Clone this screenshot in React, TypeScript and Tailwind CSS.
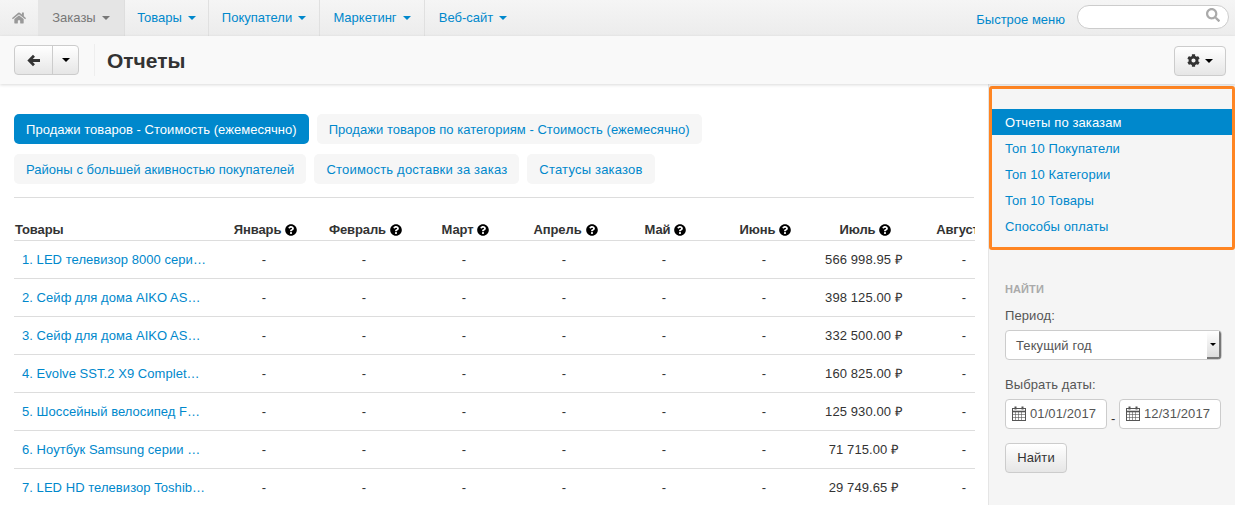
// Страница «Отчеты»: верхнее меню, панель заголовка, таблица и боковая панель
import { FaCog, FaHome, FaQuestionCircle, FaSearch } from 'react-icons/fa'

const navItems = ['Товары', 'Покупатели', 'Маркетинг', 'Веб-сайт']
const months = ['Январь', 'Февраль', 'Март', 'Апрель', 'Май', 'Июнь', 'Июль', 'Август']

const rows = [
  ['1. LED телевизор 8000 серии Samsung', '566 998.95 ₽'],
  ['2. Сейф для дома AIKO ASM-30', '398 125.00 ₽'],
  ['3. Сейф для дома AIKO ASM-20', '332 500.00 ₽'],
  ['4. Evolve SST.2 X9 Complete Set', '160 825.00 ₽'],
  ['5. Шоссейный велосипед Focus Izalco', '125 930.00 ₽'],
  ['6. Ноутбук Samsung серии 7 Chronos', '71 715.00 ₽'],
  ['7. LED HD телевизор Toshiba 32 дюйма', '29 749.65 ₽'],
]

const sideLinks = ['Топ 10 Покупатели', 'Топ 10 Категории', 'Топ 10 Товары', 'Способы оплаты']

function Caret({ className }: { className: string }) {
  return <span className={`inline-block h-0 w-0 border-x-4 border-t-4 border-x-transparent ${className}`} />
}

function CalendarIcon() {
  return (
    <svg viewBox="0 0 14 15" className="h-[15px] w-[14px] shrink-0 text-[#555]" fill="none" stroke="currentColor">
      <rect x="0.5" y="2.5" width="13" height="12" strokeWidth="1" />
      <path d="M0 5.5h14" strokeWidth="1.6" />
      <path d="M0.5 8.5h13M0.5 11.5h13M3.5 6v9M6.5 6v9M9.5 6v9" strokeWidth="0.6" />
      <path d="M3.5 0.5v3M10.5 0.5v3" strokeWidth="2" />
    </svg>
  )
}

function ArrowLeftIcon() {
  return (
    <svg viewBox="0 0 14 14" className="size-[13px] text-[#333]" fill="none" stroke="currentColor" strokeWidth="3">
      <path d="M7.5 2L2.5 7l5 5M3 7h11" />
    </svg>
  )
}

function DateInput({ value }: { value: string }) {
  return (
    <div className="flex h-[30px] w-[102px] items-center gap-[4px] rounded border border-[#ccc] bg-white pl-[6px] text-[13px] tracking-[0.1px] text-[#555]">
      <CalendarIcon />
      {value}
    </div>
  )
}

function Pill({ label, active, wide }: { label: string; active?: boolean; wide?: boolean }) {
  return (
    <a
      className={`flex h-[30px] items-center rounded-[5px] px-3 pt-px text-[13px] ${
        wide ? 'tracking-[0.2px]' : 'tracking-[0.04px]'
      } ${active ? 'bg-[#0088cc] text-white' : 'bg-[#f6f6f6] text-[#0088cc]'}`}
    >
      {label}
    </a>
  )
}

export default function App() {
  return (
    <div className="flex h-[505px] w-[1235px] flex-col overflow-hidden bg-white font-['Liberation_Sans',sans-serif] text-[13px] text-[#333]">
      {/* Верхнее меню */}
      <nav className="flex h-9 shrink-0 items-stretch bg-gradient-to-b from-[#f5f5f5] to-[#ececec]">
        <div className="flex w-[38px] items-center justify-center">
          <FaHome className="size-[14px] text-[#999]" />
        </div>
        <div className="flex w-[87px] items-center justify-center gap-[6px] border-r border-[#dedede] bg-[#e5e5e5] text-[#777]">
          Заказы
          <Caret className="border-t-[#777]" />
        </div>
        {navItems.map((item, i) => (
          <div
            key={item}
            className={`flex items-center justify-center gap-[6px] border-r border-[#e0e0e0] text-[#0088cc] ${
              ['w-[84px]', 'w-[111px]', 'w-[105px]', 'w-[96px] border-r-0'][i]
            }`}
          >
            {item}
            <Caret className="border-t-[#0088cc]" />
          </div>
        ))}
        <div className="ml-auto flex items-start pt-[5px] pr-[6px]">
          <a className="mt-[5px] text-[#0088cc]">Быстрое меню</a>
          <div className="relative ml-3 h-[24px] w-[152px] rounded-full border border-[#ccc] bg-white">
            <FaSearch className="absolute top-[2px] right-[8px] size-[14px] text-[#aaa]" />
          </div>
        </div>
      </nav>

      {/* Панель заголовка */}
      <header className="z-10 flex h-[48px] shrink-0 items-center bg-[#f9f9f9] px-[14px] shadow-[0_1px_3px_rgba(0,0,0,0.15)]">
        <div className="flex h-[30px] rounded border border-[#ccc] bg-gradient-to-b from-white to-[#e6e6e6]">
          <div className="flex w-[38px] items-center justify-center border-r border-[#ccc]">
            <ArrowLeftIcon />
          </div>
          <div className="flex w-[25px] items-center justify-center">
            <Caret className="border-t-black" />
          </div>
        </div>
        <div className="ml-[15px] flex h-[32px] items-center border-l border-[#eee] pl-[13px]">
          <h1 className="ml-[-1px] text-[21px] leading-none font-bold text-[#333]">Отчеты</h1>
        </div>
        <div className="mt-px mr-[-5px] ml-auto flex h-[30px] w-[52px] items-center justify-center gap-[5px] rounded border border-[#ccc] bg-gradient-to-b from-white to-[#e6e6e6]">
          <FaCog className="size-[13px] text-[#333]" />
          <Caret className="border-t-black" />
        </div>
      </header>

      <div className="flex min-h-0 flex-1">
        {/* Основная часть */}
        <main className="w-[988px] shrink-0 overflow-hidden px-[14px] pt-[30px]">
          <div className="flex gap-2">
            <Pill label="Продажи товаров - Стоимость (ежемесячно)" active />
            <Pill label="Продажи товаров по категориям - Стоимость (ежемесячно)" />
          </div>
          <div className="mt-[10px] flex gap-2">
            <Pill label="Районы с большей акивностью покупателей" />
            <Pill label="Стоимость доставки за заказ" wide />
            <Pill label="Статусы заказов" wide />
          </div>
          <div className="mt-[13px] border-t border-[#ddd]" />

          <div className="mt-[21px] w-[961px] overflow-hidden">
            <div className="flex h-[22px] w-[1000px] items-center border-b border-[#ddd] font-bold tracking-[-0.1px]">
              <div className="w-[200px] pl-px">Товары</div>
              {months.map((month) => (
                <div key={month} className="flex w-[100px] items-center justify-center gap-[4px] pl-[3px]">
                  {month}
                  <FaQuestionCircle className="size-[12px] text-black" />
                </div>
              ))}
            </div>
            {rows.map(([name, total]) => (
              <div key={name} className="flex h-[38px] w-[1000px] items-center border-b border-[#ddd] tracking-[0.1px]">
                <a className="w-[200px] truncate pr-[8px] pl-[8px] tracking-[0.05px] text-[#0088cc]">{name}</a>
                {months.slice(0, 6).map((month) => (
                  <div key={month} className="w-[100px] text-center">-</div>
                ))}
                <div className="w-[100px] text-center">{total}</div>
                <div className="w-[100px] text-center">-</div>
              </div>
            ))}
          </div>
        </main>

        {/* Боковая панель */}
        <aside className="w-[247px] shrink-0 border-l border-[#e5e5e5] bg-[#f5f5f5] pt-[2px] tracking-[0.1px]">
          <div className="h-[164px] rounded-[3px] border-[3px] border-[#ff8522] pt-5">
            <div className="flex h-[26px] items-center bg-[#0088cc] pt-px pl-[13px] text-white">Отчеты по заказам</div>
            {sideLinks.map((link) => (
              <div key={link} className="flex h-[26px] items-center pt-px pl-[13px] text-[#0088cc]">{link}</div>
            ))}
          </div>

          <div className="pt-[31px] pr-[13px] pl-[16px]">
            <div className="text-[11px] font-bold text-[#aaa]">НАЙТИ</div>
            <div className="mt-[8px] text-[#555]">Период:</div>
            <div className="mt-[5px] flex h-[30px] w-[217px] overflow-hidden rounded border border-[#ccc] bg-white pl-[10px]">
              <span className="flex-1 self-center pt-px text-[#555]">Текущий год</span>
              <span className="flex w-[14px] items-center justify-center border-r-2 border-b-2 border-[#777] bg-gradient-to-b from-white to-[#ddd]">
                <span className="inline-block h-0 w-0 border-x-[3px] border-t-[3px] border-x-transparent border-t-black" />
              </span>
            </div>
            <div className="mt-[15px] text-[#555]">Выбрать даты:</div>
            <div className="mt-[4px] flex items-end gap-[4px]">
              <DateInput value="01/01/2017" />
              <span className="w-[4px] leading-[20px]">-</span>
              <DateInput value="12/31/2017" />
            </div>
            <button className="mt-[14px] flex h-[30px] w-[62px] items-center justify-center rounded border border-[#ccc] bg-gradient-to-b from-white to-[#e6e6e6] text-[#333]">
              Найти
            </button>
          </div>
        </aside>
      </div>
    </div>
  )
}
